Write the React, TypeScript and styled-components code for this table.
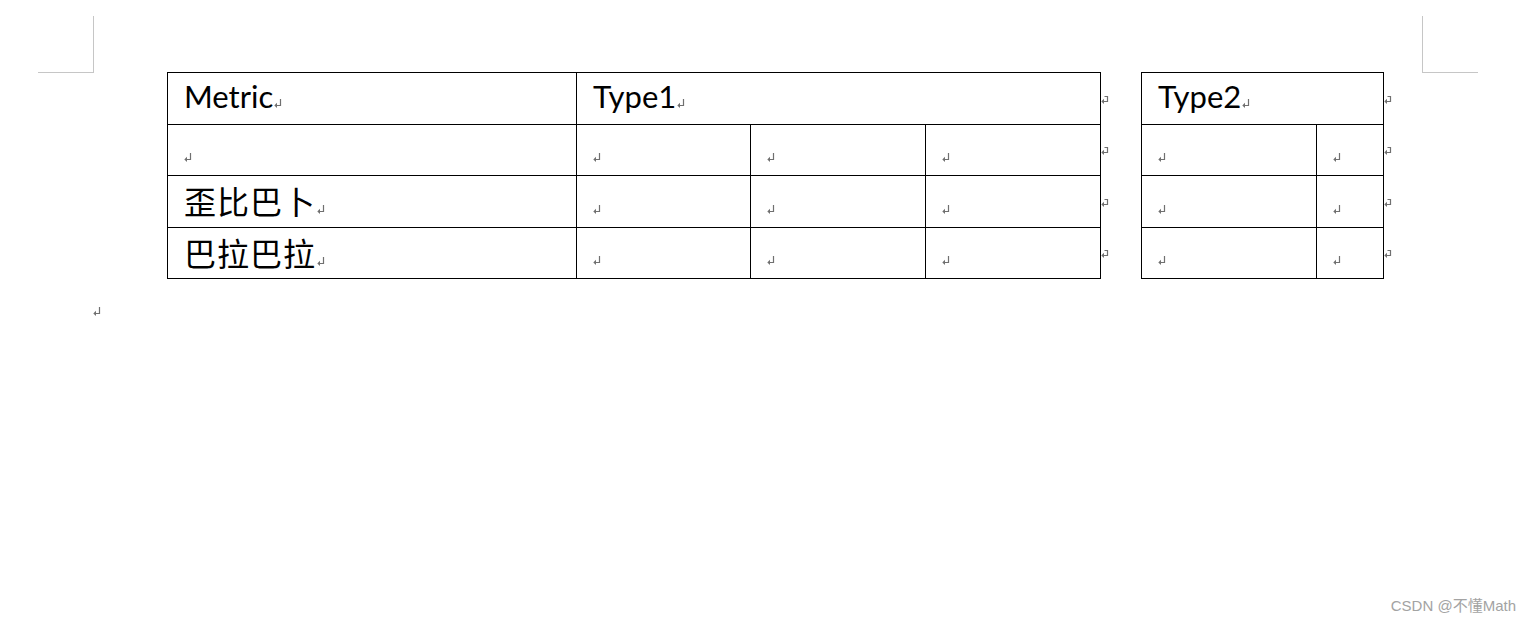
import React from 'react';
import styled, { createGlobalStyle } from 'styled-components';

const GlobalStyle = createGlobalStyle`
    html, body {
        margin: 0;
        padding: 0;
        background: #fff;
    }
    body {
        font-family: "Lato", "Noto Sans CJK SC", sans-serif;
    }
`

const Page = styled.div`
    width: 1531px;
    min-height: 624px;
    display: flex;
    flex-direction: column;
    background: #fff;
`

const MarginRow = styled.div`
    display: flex;
    justify-content: space-between;
    padding: 16px 53px 0 38px;
`

const Corner = styled.div<{ $side: 'left' | 'right' }>`
    box-sizing: border-box;
    width: 56px;
    height: 57px;
    border-bottom: 1px solid #c6c6c6;
    ${p => p.$side === 'left'
        ? 'border-right: 1px solid #c6c6c6;'
        : 'border-left: 1px solid #c6c6c6;'}
`

const TablesRow = styled.div`
    display: flex;
    align-items: flex-start;
    margin-top: -1px;
    padding-left: 167px;
`

const Grid = styled.div<{ $cols: string }>`
    display: grid;
    grid-template-columns: ${p => p.$cols};
    grid-template-rows: 52px 51px 52px 51px;
    border-left: 1px solid #000;
    border-top: 1px solid #000;
`

const Cell = styled.div<{ $span?: number; $empty?: boolean }>`
    box-sizing: border-box;
    grid-column: span ${p => p.$span || 1};
    border-right: 1px solid #000;
    border-bottom: 1px solid #000;
    display: flex;
    align-items: ${p => (p.$empty ? 'flex-end' : 'flex-start')};
    padding: ${p => (p.$empty ? '0 0 13px 16px' : '8px 0 0 16px')};
`

const HeadText = styled.span`
    font-family: "Lato", sans-serif;
    font-size: 31px;
    line-height: 31px;
    color: #000;
`

const CjkText = styled.span`
    font-family: "Noto Sans CJK SC", sans-serif;
    font-size: 32px;
    line-height: 32px;
    letter-spacing: 1px;
    color: #000;
`

const RowEnds = styled.div<{ $width: number }>`
    width: ${p => p.$width}px;
    display: grid;
    grid-template-rows: 52px 51px 52px 51px;
    padding-top: 1px;
`

const RowEnd = styled.div`
    display: flex;
    align-items: center;
`

const Paragraph = styled.div`
    padding: 21px 0 0 93px;
    height: 10px;
`

const Watermark = styled.div`
    margin-top: auto;
    align-self: flex-end;
    padding: 0 15px 9px 0;
    font-family: "Liberation Sans", "Noto Sans CJK SC", sans-serif;
    font-size: 15px;
    color: #a3a3a3;
`

const ParaMark = ({ inline }: { inline?: boolean }) => (
    <svg width="8" height="9" viewBox="0 0 8 9" style={inline ? { marginLeft: 1 } : undefined}>
        <path d="M6.5 0 V6.5 H2" fill="none" stroke="#707070" strokeWidth="1.2" />
        <path d="M0.3 6.5 L3 3.8 V9 Z" fill="#707070" />
    </svg>
)

const RowMark = () => (
    <svg width="8" height="9" viewBox="0 0 8 9">
        <path d="M3.5 1.5 H6.5 V6.5 H2" fill="none" stroke="#707070" strokeWidth="1.2" />
        <path d="M0.3 6.5 L3 3.8 V9 Z" fill="#707070" />
    </svg>
)

const Inline = styled.span`
    display: inline-flex;
    align-items: baseline;
`

const rows = ['', '歪比巴卜', '巴拉巴拉'];

const App = () => {
    return <>
        <GlobalStyle />
        <Page>
            <MarginRow>
                <Corner $side="left" />
                <Corner $side="right" />
            </MarginRow>
            <TablesRow>
                <Grid $cols="409px 174px 175px 175px">
                    <Cell><Inline><HeadText>Metric</HeadText><ParaMark inline /></Inline></Cell>
                    <Cell $span={3}><Inline><HeadText>Type1</HeadText><ParaMark inline /></Inline></Cell>
                    {rows.map((label, i) =>
                        <React.Fragment key={i}>
                            {label
                                ? <Cell><Inline><CjkText>{label}</CjkText><ParaMark inline /></Inline></Cell>
                                : <Cell $empty><ParaMark /></Cell>}
                            <Cell $empty><ParaMark /></Cell>
                            <Cell $empty><ParaMark /></Cell>
                            <Cell $empty><ParaMark /></Cell>
                        </React.Fragment>
                    )}
                </Grid>
                <RowEnds $width={40}>
                    {[0, 1, 2, 3].map(i => <RowEnd key={i}><RowMark /></RowEnd>)}
                </RowEnds>
                <Grid $cols="175px 67px">
                    <Cell $span={2}><Inline><HeadText>Type2</HeadText><ParaMark inline /></Inline></Cell>
                    {rows.map((_, i) =>
                        <React.Fragment key={i}>
                            <Cell $empty><ParaMark /></Cell>
                            <Cell $empty><ParaMark /></Cell>
                        </React.Fragment>
                    )}
                </Grid>
                <RowEnds $width={20}>
                    {[0, 1, 2, 3].map(i => <RowEnd key={i}><RowMark /></RowEnd>)}
                </RowEnds>
            </TablesRow>
            <Paragraph><ParaMark /></Paragraph>
            <Watermark>CSDN @不懂Math</Watermark>
        </Page>
    </>
};

export default App;
